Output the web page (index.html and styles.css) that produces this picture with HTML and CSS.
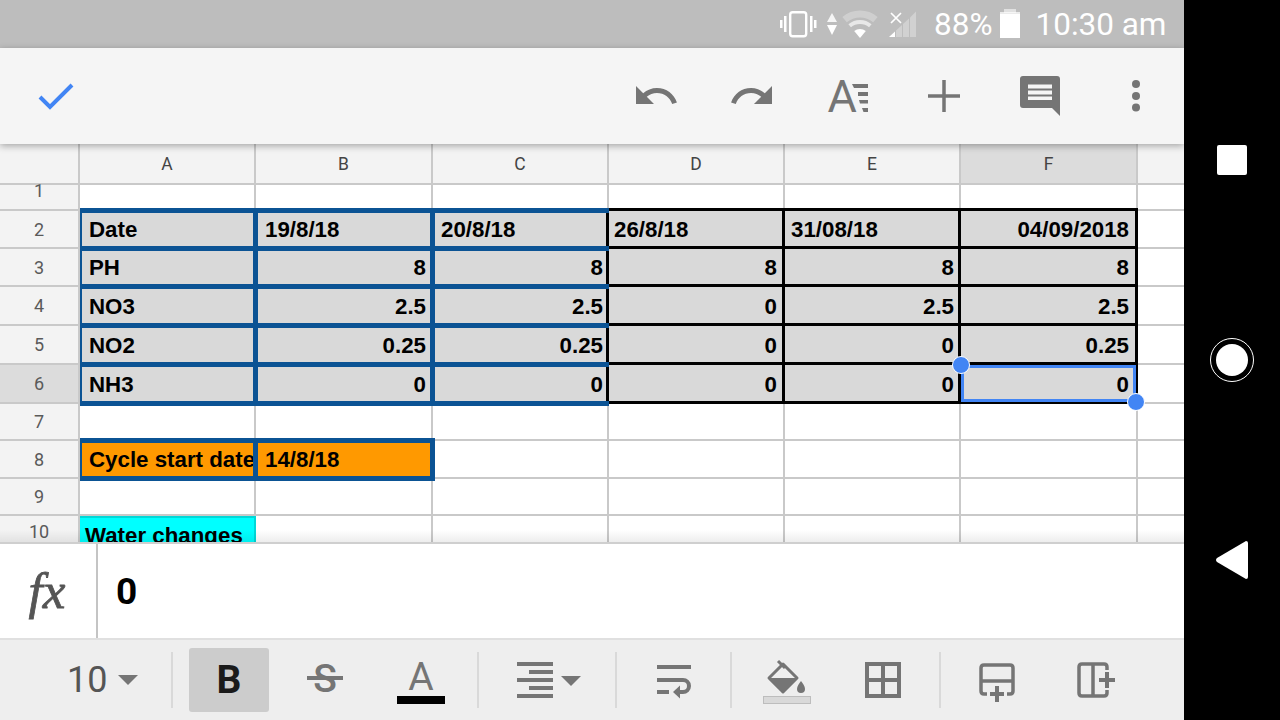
FILE: index.html
```html
<!DOCTYPE html>
<html lang="en">
<head>
<meta charset="utf-8">
<title>Sheet editor</title>
<link rel="stylesheet" href="styles.css">
</head>
<body>
<div class="app">
  <header class="status">
    <svg class="status-icons" width="140" height="48" viewBox="0 0 140 48" aria-hidden="true">
      <g fill="#fff">
        <rect x="2" y="20" width="2.5" height="8"/><rect x="6" y="16" width="2.5" height="16"/>
        <rect x="32" y="16" width="2.5" height="16"/><rect x="36" y="20" width="2.5" height="8"/>
        <polygon points="54,13 59,22 49,22" opacity=".85"/><polygon points="49,25 59,25 54,35"/>
        <polygon points="111,37 117,37 117,31.4"/>
      </g>
      <rect x="12.2" y="12.2" width="16" height="24" rx="2.5" fill="none" stroke="#fff" stroke-width="2.4"/>
      <path d="M66.6 19.6A24 24 0 0 1 97.4 19.6" fill="none" stroke="#fff" stroke-width="7" opacity=".28"/>
      <path d="M71.7 25.7A16 16 0 0 1 92.3 25.7" fill="none" stroke="#fff" stroke-width="4" opacity=".65"/>
      <path d="M82 38L76.2 31.1A9 9 0 0 1 87.8 31.1Z" fill="#fff"/>
      <g fill="#fff" opacity=".3">
        <polygon points="118,37 124,37 124,25 118,30.5"/>
        <polygon points="125,37 131,37 131,18.5 125,24"/>
        <polygon points="132,37 138,37 138,11.5 132,17.5"/>
      </g>
      <path d="M113 13L123 23M123 13L113 23" stroke="#fff" stroke-width="1.7"/>
    </svg>
    <span class="status-text pct">88%</span>
    <svg class="battery" width="20" height="30" viewBox="0 0 20 30" aria-hidden="true">
      <rect x="4" y="0" width="12" height="4" fill="#fff" opacity=".55"/>
      <rect x="0" y="3" width="20" height="3" fill="#fff" opacity=".7"/>
      <rect x="0" y="5" width="20" height="24" fill="#fff"/>
    </svg>
    <span class="status-text time">10:30 am</span>
  </header>

  <div class="toolbar">
    <button class="tb-btn" type="button" aria-label="Done">
      <svg width="48" height="48" viewBox="0 0 48 48"><path d="M8 25L18 35L40 13" fill="none" stroke="#4285f4" stroke-width="4"/></svg>
    </button>
    <span class="tb-space"></span>
    <button class="tb-btn" type="button" aria-label="Undo">
      <svg width="48" height="48" viewBox="0 0 24 24"><path class="ic" d="M12.5 8c-2.65 0-5.05.99-6.9 2.6L2 7v9h9l-3.62-3.62c1.39-1.16 3.16-1.88 5.12-1.88 3.54 0 6.55 2.31 7.6 5.5l2.37-.78C21.08 11.03 17.15 8 12.5 8z"/></svg>
    </button>
    <button class="tb-btn" type="button" aria-label="Redo">
      <svg width="48" height="48" viewBox="0 0 24 24"><path class="ic" d="M18.4 10.6C16.55 8.99 14.15 8 11.5 8c-4.65 0-8.58 3.03-9.96 7.22L3.9 16c1.05-3.19 4.05-5.5 7.6-5.5 1.95 0 3.73.72 5.12 1.88L13 16h9V7l-3.6 3.6z"/></svg>
    </button>
    <button class="tb-btn" type="button" aria-label="Format">
      <svg width="48" height="48" viewBox="0 0 48 48">
        <text class="ic-text" x="3.500" y="40" font-size="45">A</text>
        <path class="ic" d="M28 12h16v4H30zM34 20h10v4H34zM35 28h9v3.500H36zM38 36h6v4h-4.500z"/>
      </svg>
    </button>
    <button class="tb-btn" type="button" aria-label="Insert">
      <svg width="48" height="48" viewBox="0 0 48 48"><path d="M8 24H40M24 8V40" stroke="#757575" stroke-width="3.500"/></svg>
    </button>
    <button class="tb-btn" type="button" aria-label="Comment">
      <svg width="48" height="48" viewBox="0 0 48 48">
        <path class="ic" d="M7 4H41a3 3 0 0 1 3 3V44L36 36H7a3 3 0 0 1-3-3V7a3 3 0 0 1 3-3z"/>
        <path d="M12 12.500H36V16.500H12zM12 18.500H36V22.500H12zM12 24.500H36V28H12z" fill="#f5f5f5"/>
      </svg>
    </button>
    <button class="tb-btn" type="button" aria-label="More">
      <svg width="48" height="48" viewBox="0 0 48 48"><g class="ic"><circle cx="24" cy="12" r="4"/><circle cx="24" cy="24" r="4"/><circle cx="24" cy="35.500" r="4"/></g></svg>
    </button>
  </div>

  <main class="sheet">
    <div class="grid">
      <div class="cell head"></div>
      <div class="cell head">A</div><div class="cell head">B</div><div class="cell head">C</div><div class="cell head">D</div><div class="cell head">E</div><div class="cell head active">F</div><div class="cell head"></div>

      <div class="cell rowh first">1</div>
      <div class="cell"></div><div class="cell"></div><div class="cell"></div><div class="cell"></div><div class="cell"></div><div class="cell"></div><div class="cell"></div>

      <div class="cell rowh">2</div>
      <div class="cell val grey blue edge pa">Date</div>
      <div class="cell val grey blue pb">19/8/18</div>
      <div class="cell val grey blue open pc">20/8/18</div>
      <div class="cell val grey black pd">26/8/18</div>
      <div class="cell val grey black pe">31/08/18</div>
      <div class="cell val grey black pf num">04/09/2018</div>
      <div class="cell"></div>

      <div class="cell rowh">3</div>
      <div class="cell val grey blue edge pa">PH</div>
      <div class="cell val grey blue pb num">8</div>
      <div class="cell val grey blue open pc num">8</div>
      <div class="cell val grey black pd num">8</div>
      <div class="cell val grey black pe num">8</div>
      <div class="cell val grey black pf num">8</div>
      <div class="cell"></div>

      <div class="cell rowh">4</div>
      <div class="cell val grey blue edge pa">NO3</div>
      <div class="cell val grey blue pb num">2.5</div>
      <div class="cell val grey blue open pc num">2.5</div>
      <div class="cell val grey black pd num">0</div>
      <div class="cell val grey black pe num">2.5</div>
      <div class="cell val grey black pf num">2.5</div>
      <div class="cell"></div>

      <div class="cell rowh">5</div>
      <div class="cell val grey blue edge pa">NO2</div>
      <div class="cell val grey blue pb num">0.25</div>
      <div class="cell val grey blue open pc num">0.25</div>
      <div class="cell val grey black pd num">0</div>
      <div class="cell val grey black pe num">0</div>
      <div class="cell val grey black pf num">0.25</div>
      <div class="cell"></div>

      <div class="cell rowh active">6</div>
      <div class="cell val grey blue edge pa">NH3</div>
      <div class="cell val grey blue pb num">0</div>
      <div class="cell val grey blue open pc num">0</div>
      <div class="cell val grey black pd num">0</div>
      <div class="cell val grey black pe num">0</div>
      <div class="cell val grey black pf num selected">0
        <span class="selection"></span>
        <span class="handle handle-start"></span>
        <span class="handle handle-end"></span>
      </div>
      <div class="cell"></div>

      <div class="cell rowh">7</div>
      <div class="cell"></div><div class="cell"></div><div class="cell"></div><div class="cell"></div><div class="cell"></div><div class="cell"></div><div class="cell"></div>

      <div class="cell rowh">8</div>
      <div class="cell val orange blue edge pa">Cycle start date</div>
      <div class="cell val orange blue pb">14/8/18</div>
      <div class="cell"></div><div class="cell"></div><div class="cell"></div><div class="cell"></div><div class="cell"></div>

      <div class="cell rowh">9</div>
      <div class="cell"></div><div class="cell"></div><div class="cell"></div><div class="cell"></div><div class="cell"></div><div class="cell"></div><div class="cell"></div>

      <div class="cell rowh last">10</div>
      <div class="cell val cyan">Water changes</div>
      <div class="cell"></div><div class="cell"></div><div class="cell"></div><div class="cell"></div><div class="cell"></div><div class="cell"></div>
    </div>
  </main>

  <div class="formula">
    <div class="fx">fx</div>
    <div class="formula-value">0</div>
  </div>

  <footer class="format">
    <div class="size"><span class="size-num">10</span>
      <svg class="size-caret" width="20" height="10" viewBox="0 0 20 10"><polygon class="ic" points="0,0 20,0 10,10"/></svg>
    </div>
    <span class="sep"></span>
    <div class="tool first-tool"><span class="bold-btn">B</span></div>
    <div class="tool">
      <svg width="48" height="64" viewBox="0 0 48 64">
        <text class="ic-text" x="24" y="44" font-size="39" font-weight="500" text-anchor="middle">S</text>
        <rect class="ic" x="6" y="28" width="36" height="4"/>
      </svg>
    </div>
    <div class="tool">
      <svg width="48" height="64" viewBox="0 0 48 64">
        <text class="ic-text" x="24" y="42" font-size="39" text-anchor="middle">A</text>
        <rect x="0" y="48" width="48" height="8" fill="#000"/>
      </svg>
    </div>
    <span class="sep sep-a"></span>
    <div class="tool tool-align">
      <svg width="64" height="64" viewBox="0 0 64 64">
        <path class="ic" d="M0 14H36V18H0zM12 22H36V26H12zM0 30H36V34H0zM12 38H36V42H12zM0 46H36V50H0z"/>
        <polygon class="ic" points="44,28 64,28 54,38"/>
      </svg>
    </div>
    <span class="sep"></span>
    <div class="tool tool-wrap">
      <svg width="48" height="64" viewBox="0 0 48 64">
        <path class="ic" d="M7 17H41V21H7zM7 42H19V46H7z"/>
        <path d="M7 32H33a6 6 0 0 1 0 12H27" fill="none" stroke="#757575" stroke-width="4"/>
        <polygon class="ic" points="30,37.500 30,50.500 23,44"/>
      </svg>
    </div>
    <span class="sep"></span>
    <div class="tool tool-fill">
      <svg width="48" height="64" viewBox="0 0 48 64">
        <path d="M6 30L20 16L34 30L20 44Z" fill="none" stroke="#757575" stroke-width="3" stroke-linejoin="round"/>
        <path class="ic" d="M6 30H34L20 45Z"/>
        <path d="M15 13L22 20" stroke="#757575" stroke-width="3"/>
        <path class="ic" d="M38 33c-2 3-4 5-4 8a4 4 0 0 0 8 0c0-3-2-5-4-8z"/>
        <rect x=".5" y="48.500" width="47" height="7" fill="#d9d9d9" stroke="#bdbdbd"/>
      </svg>
    </div>
    <div class="tool">
      <svg width="48" height="64" viewBox="0 0 48 64">
        <path d="M8 16H40V48H8ZM24 16V48M8 32H40" fill="none" stroke="#757575" stroke-width="4"/>
      </svg>
    </div>
    <span class="sep sep-b"></span>
    <div class="tool tool-row">
      <svg width="48" height="64" viewBox="0 0 48 64">
        <path d="M14 46H11q-3 0-3-3V20q0-3 3-3H37q3 0 3 3V43q0 3-3 3H34M8 33H40" fill="none" stroke="#757575" stroke-width="3.500"/>
        <path d="M24 38V54M17 46H31" stroke="#757575" stroke-width="4"/>
      </svg>
    </div>
    <div class="tool tool-col">
      <svg width="48" height="64" viewBox="0 0 48 64">
        <path d="M35 22V19q0-3-3-3H10q-3 0-3 3V45q0 3 3 3H32q3 0 3-3V42M21 16V48" fill="none" stroke="#757575" stroke-width="3.500"/>
        <path d="M27 32H43M35 24V40" stroke="#757575" stroke-width="4"/>
      </svg>
    </div>
  </footer>
</div>

<nav class="nav" aria-label="System navigation">
  <div class="nav-slot"><span class="nav-recent"></span></div>
  <div class="nav-slot"><span class="nav-home"></span></div>
  <div class="nav-slot">
    <svg width="34" height="40" viewBox="0 0 34 40"><path d="M31 1L2 18q-2 2 0 4L31 39q2 0 2-2V3q0-2-2-2z" fill="#fff"/></svg>
  </div>
</nav>
</body>
</html>
```

FILE: styles.css
```css
* { box-sizing: border-box; }

html, body {
  margin: 0;
  height: 720px;
  overflow: hidden;
}

body {
  display: flex;
  background: #000;
  font-family: Roboto, "Liberation Sans", sans-serif;
}

.app {
  width: 1184px;
  height: 720px;
  display: flex;
  flex-direction: column;
  background: #fff;
}

/* status bar */
.status {
  height: 48px;
  flex: none;
  background: #bdbdbd;
  display: flex;
  align-items: center;
  padding: 0 16px 0 778px;
  color: #fff;
}

.status-icons { flex: none; }

.status-text {
  font-size: 31.500px;
  line-height: 48px;
  padding-top: 2px;
  white-space: nowrap;
}

.pct { margin-left: 16px; }
.battery { margin: 0 0 1px 8px; flex: none; }
.time { margin-left: 15px; }

/* top toolbar */
.toolbar {
  position: relative;
  z-index: 5;
  height: 96px;
  flex: none;
  display: flex;
  align-items: center;
  padding-left: 8px;
  background: #f5f5f5;
  box-shadow: 0 2px 7px rgba(0, 0, 0, .32);
}

.tb-space { width: 504px; flex: none; }

.tb-btn {
  width: 96px;
  height: 96px;
  flex: none;
  padding: 0;
  border: 0;
  background: none;
  display: flex;
  align-items: center;
  justify-content: center;
}

.ic { fill: #757575; }
.ic-text { fill: #757575; font-family: Roboto, sans-serif; }

/* sheet */
.sheet {
  position: relative;
  height: 398px;
  flex: none;
  overflow: hidden;
}

.sheet::after {
  content: "";
  position: absolute;
  left: 0;
  right: 0;
  bottom: 0;
  height: 12px;
  z-index: 4;
  background: linear-gradient(rgba(0, 0, 0, 0), rgba(0, 0, 0, .07));
  pointer-events: none;
}

.grid {
  display: grid;
  grid-template-columns: 80px 176px 177px 176px 176px 176px 177px 46px;
  grid-template-rows: 41px 26px 38px 38px 39px 39px 39px 37px 38px 37px 38px;
}

.cell {
  position: relative;
  border-right: 2px solid #c9c9c9;
  border-bottom: 2px solid #c9c9c9;
  background: #fff;
  min-width: 0;
}

.cell:nth-child(8n) { border-right: 0; }

.head {
  background: #f3f3f3;
  color: #444;
  font-size: 17.500px;
  display: flex;
  align-items: center;
  justify-content: center;
}

.head.active, .rowh.active { background: #dcdcdc; }

.rowh {
  background: #f3f3f3;
  color: #5a5a5a;
  font-size: 18px;
  display: flex;
  align-items: center;
  justify-content: center;
}

.rowh.first {
  align-items: flex-start;
  line-height: 12px;
}

.rowh.last { padding-bottom: 5px; }

.val {
  display: flex;
  align-items: center;
  border: 0;
  font-family: "Liberation Sans", Arial, sans-serif;
  font-weight: 700;
  font-size: 22.300px;
  color: #000;
  white-space: nowrap;
  overflow: visible;
}

.grey { background: #d9d9d9; }
.orange { background: #ff9900; }

.cyan {
  background: #00ffff;
  box-shadow: inset 0 2px 0 #00d8d8, inset -2px 0 0 #00d8d8;
  padding: 2px 0 0 5px;
}

.num { justify-content: flex-end; }

.pa { padding: 0 0 0 9px; }
.pb { padding: 0 7px 0 9px; }
.pc { padding: 0 6px 0 8px; }
.pd { padding: 0 8px 0 5px; }
.pe { padding: 0 7px 0 6px; }
.pf { padding: 0 9px 0 6px; }

.blue::after, .black::after {
  content: "";
  position: absolute;
  pointer-events: none;
}

.blue::after {
  z-index: 2;
  top: -3px;
  left: -3px;
  right: -2px;
  bottom: -2px;
  border: 5px solid #0b5394;
}

.blue.edge::after { left: 0; border-left-width: 2px; }
.blue.open::after { right: 0; border-right: 0; }

.black::after {
  z-index: 1;
  top: -3px;
  left: -3px;
  right: 0;
  bottom: 0;
  border: 3px solid #000;
}

.selection {
  position: absolute;
  z-index: 2;
  top: 0;
  left: 0;
  right: 2px;
  bottom: 2px;
  border: 3px solid #4285f4;
}

.handle {
  position: absolute;
  z-index: 3;
  width: 18px;
  height: 18px;
  border-radius: 50%;
  background: #4285f4;
  border: 1.500px solid #fff;
}

.handle-start { left: -9px; top: -9px; }
.handle-end { right: -7px; bottom: -7px; }

/* formula bar */
.formula {
  position: relative;
  z-index: 5;
  height: 98px;
  flex: none;
  display: flex;
  background: #fff;
  border-top: 2px solid #cfcfcf;
  border-bottom: 2px solid #e0e0e0;
}

.fx {
  width: 98px;
  flex: none;
  border-right: 2px solid #c4c4c4;
  padding-right: 2px;
  display: flex;
  align-items: center;
  justify-content: center;
  font-family: "Liberation Serif", serif;
  font-style: italic;
  font-size: 51px;
  color: #555;
  -webkit-text-stroke: .8px #555;
}

.formula-value {
  padding-left: 18px;
  display: flex;
  align-items: center;
  font-weight: 700;
  font-size: 37px;
  color: #000;
}

/* format bar */
.format {
  flex: 1;
  display: flex;
  align-items: center;
  background: #eee;
}

.size {
  width: 171px;
  flex: none;
  padding-left: 67px;
  display: flex;
  align-items: center;
}

.size-num {
  font-size: 36px;
  line-height: 42px;
  color: #555;
}

.size-caret { margin-left: 11px; flex: none; }

.sep {
  width: 2px;
  height: 56px;
  flex: none;
  background: #d9d9d9;
}

.sep-a { margin-left: 8px; }
.sep-b { margin-left: 8px; }

.tool {
  width: 96px;
  height: 64px;
  flex: none;
  display: flex;
  align-items: center;
  justify-content: center;
}

.first-tool { margin-left: 8px; }

.bold-btn {
  width: 80px;
  height: 64px;
  border-radius: 3px;
  background: #ccc;
  display: flex;
  align-items: center;
  justify-content: center;
  font-weight: 700;
  font-size: 39px;
  color: #1a1a1a;
}

.tool-align { width: 136px; justify-content: flex-start; padding-left: 38px; }
.tool-wrap { width: 113px; justify-content: flex-start; padding-left: 33px; }
.tool-fill { margin-left: 7px; }
.tool-row { margin-left: 8px; }
.tool-col { margin-left: 3px; }

/* android navigation */
.nav {
  width: 96px;
  height: 720px;
  flex: none;
  padding-top: 60px;
  display: flex;
  flex-direction: column;
  background: #000;
}

.nav-slot {
  height: 200px;
  display: flex;
  align-items: center;
  justify-content: center;
}

.nav-recent {
  width: 30px;
  height: 30px;
  border-radius: 2px;
  background: #fff;
}

.nav-home {
  width: 44px;
  height: 44px;
  border-radius: 50%;
  border: 1.500px solid #fff;
  display: flex;
  align-items: center;
  justify-content: center;
}

.nav-home::before {
  content: "";
  width: 32px;
  height: 32px;
  border-radius: 50%;
  background: #fff;
}
```
